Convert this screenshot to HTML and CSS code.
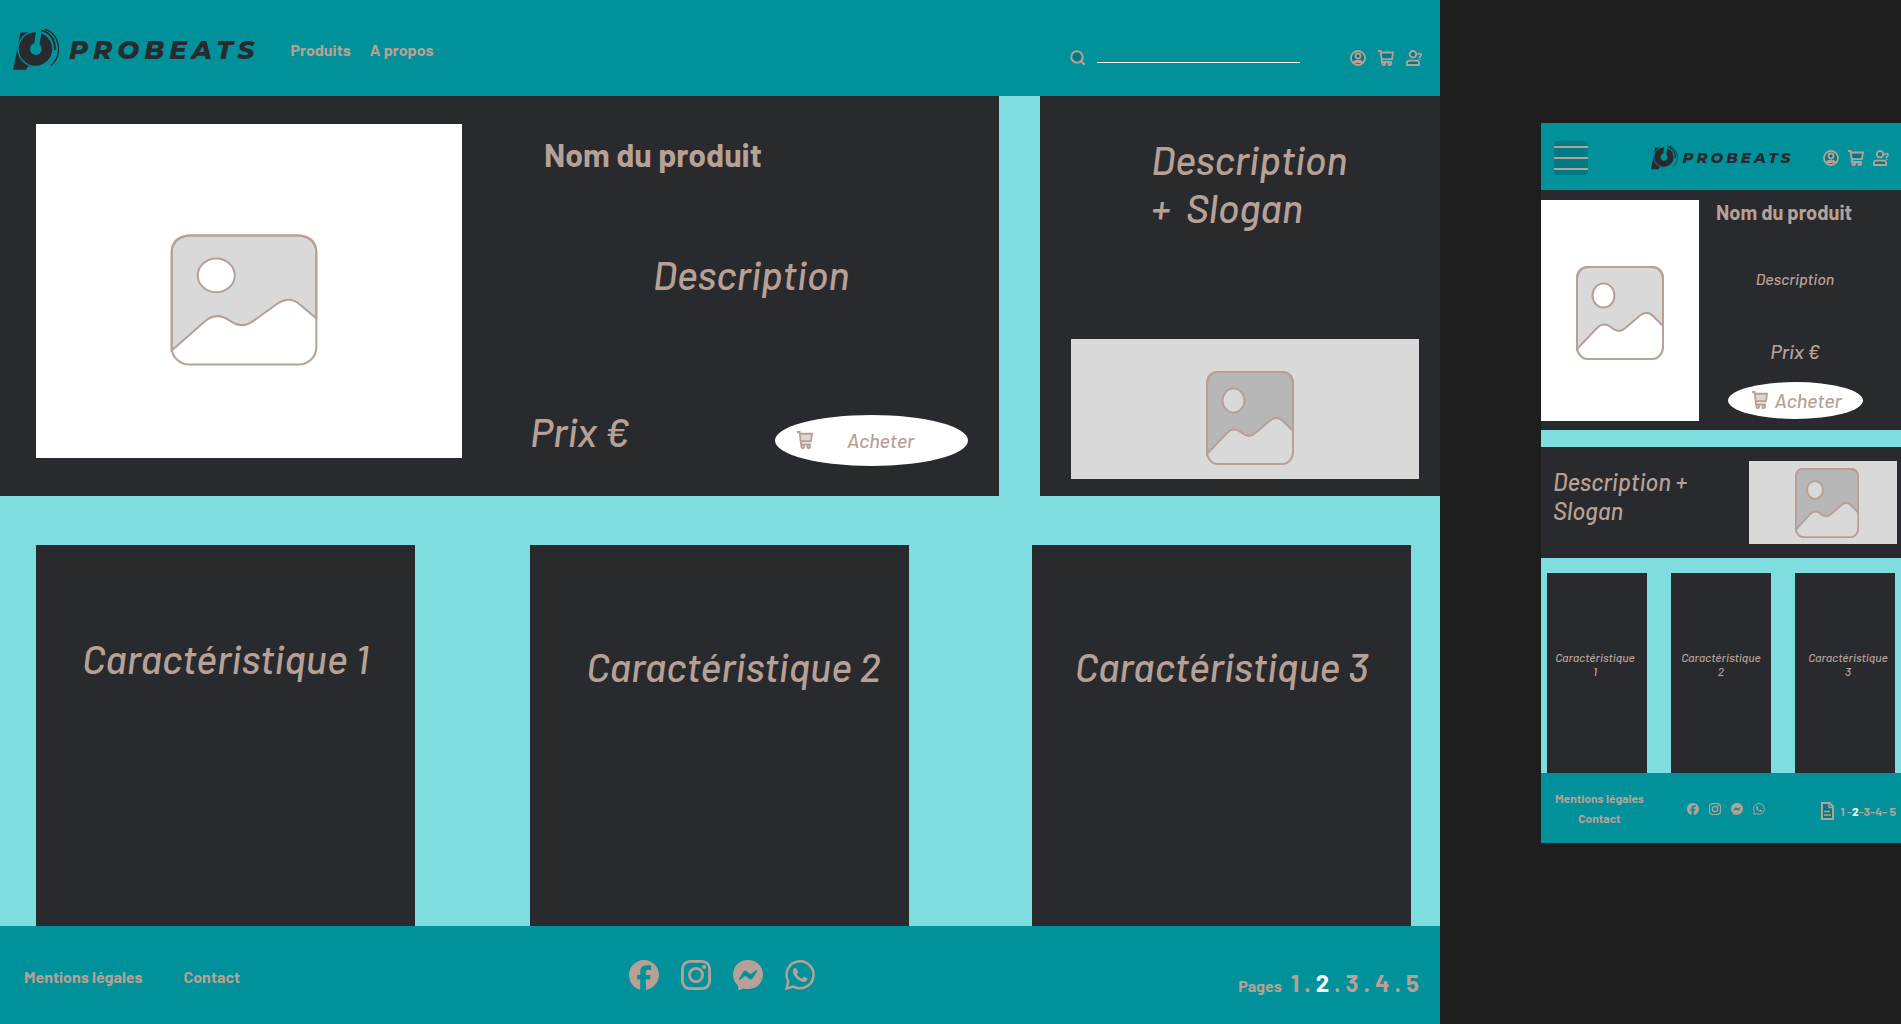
FILE: index.html
```html
<!DOCTYPE html>
<html lang="fr">
<head>
<meta charset="utf-8">
<meta name="viewport" content="width=device-width, initial-scale=1">
<title>Probeats</title>
<link rel="stylesheet" href="styles.css">
</head>
<body>
<svg class="sprite" aria-hidden="true">
  <symbol id="logo" viewBox="38 86 142 125">
    <path fill="currentColor" d="M60 97H104V200H82L78 210H38Z"/>
    <circle class="logo-cut" cx="106" cy="147" r="55"/>
    <circle fill="currentColor" cx="106" cy="147" r="51"/>
    <circle class="logo-cut" cx="107" cy="147" r="18"/>
    <path class="logo-cut" d="M108 90H125L118 136H101Z"/>
    <g fill="none" stroke="currentColor" stroke-width="4">
      <path d="M134 88C160 92 176 118 176 147C176 168 167 186 153 197"/>
      <path d="M124 91C150 95 167 120 165 150" stroke-width="6"/>
    </g>
  </symbol>
  <symbol id="placeholder" viewBox="0 0 88 94" preserveAspectRatio="none">
    <path class="ph-sky" d="M1 83V13Q1 1 13 1H75Q87 1 87 13V60L77 50Q71 44 64 49.500L50 61.500Q43 68 36 62Q28 55 21 62Z"/>
    <ellipse class="ph-sun" cx="27.500" cy="29.500" rx="11" ry="12"/>
    <rect class="ph-line" x="1" y="1" width="86" height="92" rx="11" ry="12"/>
  </symbol>
  <symbol id="search" viewBox="0 0 16 16">
    <circle class="tint" cx="7" cy="7" r="5.700" stroke="currentColor" stroke-width="2"/>
    <path d="M11 11L14.500 14.800" stroke="currentColor" stroke-width="2.200"/>
  </symbol>
  <symbol id="account" viewBox="0 0 16 16">
    <g class="tint" stroke="currentColor" stroke-width="1.800">
      <circle cx="8" cy="8" r="7"/><circle cx="8" cy="6" r="2.500"/>
      <path d="M3.800 12.200C5 10 11 10 12.200 12.200Z"/>
    </g>
  </symbol>
  <symbol id="cart" viewBox="0 0 16 16" preserveAspectRatio="none">
    <path class="tint" d="M3 2H15.200L14 10H4Z"/>
    <g fill="none" stroke="currentColor" stroke-width="1.800">
      <path d="M0 1H2.600L4 12H13.800M3 2.500H15L14 9.200H3.800"/>
      <circle cx="5.700" cy="13.800" r="1.400"/><circle cx="11.700" cy="13.800" r="1.400"/>
    </g>
  </symbol>
  <symbol id="help" viewBox="0 0 16 16">
    <g class="tint" stroke="currentColor" stroke-width="1.900">
      <circle cx="7" cy="4.200" r="3.200"/>
      <path d="M1 15V12.500Q1 10.600 4 10.600H10Q13 10.600 13 12.500V15Z"/>
    </g>
    <path d="M11.800 5Q12 3.400 13.600 3.500Q15.200 3.700 15 5.200Q14.800 6.200 13.600 7V8.200M13.600 9V10" fill="none" stroke="currentColor" stroke-width="1.700"/>
  </symbol>
  <symbol id="facebook" viewBox="0 0 16 16"><path fill="currentColor" d="M16 8.049c0-4.446-3.582-8.050-8-8.050C3.580 0 0 3.603 0 8.050c0 4.017 2.926 7.347 6 7.851v-5.525H4.300V8.050H6V6.275c0-2.317 1.395-3.431 3.500-3.431h2.300v2.300H10.300c-.993 0-1.303.621-1.303 1.258v1.648h2.518l-.354 2.326H9V16c3.824-.604 7-3.934 7-7.951"/></symbol>
  <symbol id="instagram" viewBox="0 0 16 16">
    <g fill="none" stroke="currentColor" stroke-width="1.500"><rect x=".75" y=".75" width="14.500" height="14.500" rx="4"/><circle cx="8" cy="8" r="3.500"/></g>
    <circle cx="12.300" cy="3.700" r="1.100" fill="currentColor"/>
  </symbol>
  <symbol id="messenger" viewBox="0 0 16 16"><path fill="currentColor" fill-rule="evenodd" d="M0 7.760C0 3.301 3.493 0 8 0s8 3.301 8 7.760-3.493 7.760-8 7.760c-.81 0-1.586-.107-2.316-.307a.64.64 0 0 0-.427.03l-1.588.702a.64.64 0 0 1-.898-.566l-.044-1.423a.64.64 0 0 0-.215-.456C.956 12.108 0 10.092 0 7.760m5.546-1.459-2.350 3.728c-.225.358.214.761.551.506l2.525-1.916a.48.48 0 0 1 .578-.002l1.869 1.402a1.200 1.200 0 0 0 1.735-.32l2.350-3.728c.226-.358-.214-.761-.551-.506L9.728 7.381a.48.48 0 0 1-.578.002L7.281 5.980a1.200 1.200 0 0 0-1.735.32z"/></symbol>
  <symbol id="whatsapp" viewBox="0 0 16 16">
    <path d="M.8 15.200L1.800 11.500A7.200 7.200 0 1 1 4.600 14.200Z" fill="none" stroke="currentColor" stroke-width="1.300"/>
    <path fill="currentColor" d="M4.200 6C4.100 4.700 5.300 4.100 6 4.400L6.900 6.300Q7 6.700 6.300 7.500C7 8.800 8 9.500 9 9.900L9.900 9Q10.200 8.800 12 9.900C12.100 10.900 11 11.800 10 11.700C7.300 11.500 4.300 8.600 4.200 6Z"/>
  </symbol>
  <symbol id="document" viewBox="0 0 13 18">
    <path class="tint" d="M1 1H8.500L12 4.500V17H1Z" stroke="currentColor" stroke-width="2"/>
    <path d="M8 1V5.500H12M3 9.500H9M3 13H10" fill="none" stroke="currentColor" stroke-width="1.400"/>
  </symbol>
</svg>

<div class="board">
  <div class="frame desktop">
    <header class="topbar">
      <a class="brand" href="#"><svg class="brand-mark"><use href="#logo"/></svg><span class="brand-name">PROBEATS</span></a>
      <nav class="menu"><a href="#">Produits</a><a href="#">A propos</a></nav>
      <form class="search" role="search">
        <label for="q"><svg class="icon"><use href="#search"/></svg></label>
        <input id="q" type="search" aria-label="Rechercher">
      </form>
      <div class="tools">
        <a href="#" aria-label="Compte"><svg class="icon"><use href="#account"/></svg></a>
        <a href="#" aria-label="Panier"><svg class="icon"><use href="#cart"/></svg></a>
        <a href="#" aria-label="Aide"><svg class="icon"><use href="#help"/></svg></a>
      </div>
    </header>
    <main>
      <div class="hero">
        <section class="product">
          <div class="picture"><svg class="placeholder"><use href="#placeholder"/></svg></div>
          <div class="details">
            <h1 class="name">Nom du produit</h1>
            <p class="description">Description</p>
            <div class="purchase">
              <p class="price">Prix €</p>
              <button class="buy" type="button"><svg class="icon"><use href="#cart"/></svg><span>Acheter</span></button>
            </div>
          </div>
        </section>
        <section class="pitch">
          <p class="slogan">Description<br>+&nbsp; Slogan</p>
          <div class="picture muted"><svg class="placeholder"><use href="#placeholder"/></svg></div>
        </section>
      </div>
      <div class="features">
        <section class="feature feature-first"><h2>Caractéristique 1</h2></section>
        <section class="feature feature-second"><h2>Caractéristique 2</h2></section>
        <section class="feature feature-third"><h2>Caractéristique 3</h2></section>
      </div>
    </main>
    <footer class="bottombar">
      <nav class="legal"><a href="#">Mentions légales</a><a href="#">Contact</a></nav>
      <div class="social">
        <a href="#" aria-label="Facebook"><svg><use href="#facebook"/></svg></a>
        <a href="#" aria-label="Instagram"><svg><use href="#instagram"/></svg></a>
        <a href="#" aria-label="Messenger"><svg><use href="#messenger"/></svg></a>
        <a href="#" aria-label="WhatsApp"><svg><use href="#whatsapp"/></svg></a>
      </div>
      <nav class="pages" aria-label="Pages">
        <span class="pages-label">Pages</span>
        <a href="#">1</a><span>.</span><a href="#" aria-current="page">2</a><span>.</span><a href="#">3</a><span>.</span><a href="#">4</a><span>.</span><a href="#">5</a>
      </nav>
    </footer>
  </div>

  <div class="frame mobile">
    <header class="topbar">
      <button class="burger" type="button" aria-label="Menu"><span></span><span></span><span></span></button>
      <a class="brand" href="#"><svg class="brand-mark"><use href="#logo"/></svg><span class="brand-name">PROBEATS</span></a>
      <div class="tools">
        <a href="#" aria-label="Compte"><svg class="icon"><use href="#account"/></svg></a>
        <a href="#" aria-label="Panier"><svg class="icon"><use href="#cart"/></svg></a>
        <a href="#" aria-label="Aide"><svg class="icon"><use href="#help"/></svg></a>
      </div>
    </header>
    <main>
      <section class="product">
        <div class="picture"><svg class="placeholder"><use href="#placeholder"/></svg></div>
        <div class="details">
          <h1 class="name">Nom du produit</h1>
          <p class="description">Description</p>
          <p class="price">Prix €</p>
          <button class="buy" type="button"><svg class="icon"><use href="#cart"/></svg><span>Acheter</span></button>
        </div>
      </section>
      <section class="pitch">
        <p class="slogan">Description +<br>Slogan</p>
        <div class="picture muted"><svg class="placeholder"><use href="#placeholder"/></svg></div>
      </section>
      <div class="features">
        <section class="feature feature-first"><h2>Caractéristique 1</h2></section>
        <section class="feature"><h2>Caractéristique 2</h2></section>
        <section class="feature feature-third"><h2>Caractéristique 3</h2></section>
      </div>
    </main>
    <footer class="bottombar">
      <nav class="legal"><a href="#">Mentions légales</a><a href="#">Contact</a></nav>
      <div class="social">
        <a href="#" aria-label="Facebook"><svg><use href="#facebook"/></svg></a>
        <a href="#" aria-label="Instagram"><svg><use href="#instagram"/></svg></a>
        <a href="#" aria-label="Messenger"><svg><use href="#messenger"/></svg></a>
        <a href="#" aria-label="WhatsApp"><svg><use href="#whatsapp"/></svg></a>
      </div>
      <nav class="pages" aria-label="Pages">
        <svg class="doc"><use href="#document"/></svg>
        <span><a href="#">1</a> -<a href="#" aria-current="page">2</a>-<a href="#">3</a>-<a href="#">4</a>- <a href="#">5</a></span>
      </nav>
    </footer>
  </div>
</div>
</body>
</html>
```
FILE: styles.css
```css
:root {
  --teal: #00919a;
  --aqua: #7fdde0;
  --ink: #292a2e;
  --sand: #b7a197;
  --grey: #d9d9d9;
}

* { box-sizing: border-box; }

body {
  margin: 0;
  background: #1e1e1e;
  color: var(--sand);
  font: 500 16px/20px Barlow, Roboto, sans-serif;
}

h1, h2, p { margin: 0; }
a { color: inherit; text-decoration: none; }
svg { display: block; }
button { border: 0; padding: 0; color: inherit; font: inherit; cursor: pointer; }

.sprite { position: absolute; width: 0; height: 0; }
.logo-cut { fill: var(--teal); }
.tint { fill: rgba(0, 0, 0, .15); }
.icon { width: 16px; height: 16px; }

.board {
  display: grid;
  grid-template-columns: 1440fr 360fr;
  column-gap: 101px;
  align-items: start;
  min-height: 100vh;
}

.frame { background: var(--aqua); }

/* Shared pieces */
.topbar, .bottombar { display: flex; background: var(--teal); }
.brand { display: flex; color: var(--ink); }
.brand-name {
  font-family: Montserrat, Inter, sans-serif;
  font-weight: 800;
  font-style: italic;
}
.menu, .bottombar { font-weight: 700; }
.tools, .social, .menu, .search { display: flex; }
.name { font-weight: 700; }
.description, .price, .slogan, .feature h2, .buy { font-style: italic; font-weight: 500; }

.product, .pitch, .feature { background: var(--ink); }
.product { display: grid; }

.picture {
  --sky: var(--grey);
  --ground: #fff;
  display: flex;
  align-items: center;
  justify-content: center;
  background: var(--ground);
}
.picture.muted { --sky: #b7b7b7; --ground: var(--grey); }
.ph-sky { fill: var(--sky); }
.ph-sun { fill: var(--ground); }
.ph-line { fill: none; }
.ph-sky, .ph-sun, .ph-line {
  stroke: var(--sand);
  stroke-width: 2px;
  vector-effect: non-scaling-stroke;
}

.buy {
  display: flex;
  align-items: center;
  border-radius: 50%;
  background: #fff;
  font-size: 20px;
  line-height: 24px;
}
.buy .icon { height: 18px; }

.features { display: grid; }
.feature h2 { text-align: center; }
[aria-current="page"] { color: #fff; }

/* Desktop frame */
.desktop .topbar { height: 96px; padding: 0 17px 0 13px; }
.desktop .brand { align-self: center; align-items: center; gap: 9px; padding-top: 3px; }
.desktop .brand-mark { width: 47px; height: 41px; }
.desktop .brand-name { font-size: 26px; line-height: 32px; letter-spacing: 5px; }
.desktop .menu { align-self: center; gap: 19px; margin: 4px auto 0 31px; }
.desktop .search { align-items: flex-start; gap: 11px; padding-top: 50px; }
.search input {
  width: 203px;
  height: 13px;
  padding: 0;
  border: 0;
  border-bottom: 1px solid #fff;
  outline: 0;
  background: none;
  color: #fff;
  font: inherit;
}
.desktop .tools { gap: 12px; padding: 50px 1px 0 50px; }

.hero { display: grid; grid-template-columns: 999fr 400fr; column-gap: 41px; }
.desktop .product { grid-template-columns: 426fr 537fr; padding: 28px 0 30px 36px; }
.desktop .product .picture { margin-bottom: 8px; }
.desktop .product .placeholder { width: 148px; height: 132px; margin: 18px 10px 0 0; }
.desktop .details { padding: 10px 31px 0 68px; }
.desktop .name { padding-left: 14px; font-size: 32px; line-height: 40px; }
.desktop .description { margin-top: 76px; padding-left: 4px; text-align: center; font-size: 40px; line-height: 48px; }
.purchase { display: flex; justify-content: space-between; margin-top: 109px; }
.desktop .price { font-size: 40px; line-height: 48px; }
.desktop .buy { width: 193px; height: 51px; margin-top: 8px; padding: 0 0 1px 22px; gap: 34px; }

.desktop .pitch {
  display: flex;
  flex-direction: column;
  justify-content: space-between;
  padding: 39px 21px 17px 31px;
}
.desktop .slogan { padding-left: 80px; font-size: 40px; line-height: 48px; }
.desktop .pitch .picture { height: 140px; padding: 18px 0 0 10px; }
.desktop .pitch .placeholder { width: 88px; height: 94px; }

.desktop .features {
  grid-template-columns: 379fr 115fr 379fr 123fr 379fr;
  padding: 49px 29px 0 36px;
}
.desktop .feature { min-height: 381px; padding-top: 97px; }
.desktop .feature-first { padding-top: 89px; }
.desktop .feature-second { grid-column: 3; padding-left: 28px; }
.desktop .feature-third { grid-column: 5; }
.desktop .feature h2 { font-size: 40px; line-height: 48px; white-space: nowrap; }

.desktop .bottombar {
  display: grid;
  grid-template-columns: 1fr auto 1fr;
  align-items: center;
  min-height: 98px;
  padding: 0 21px 0 24px;
}
.desktop .legal { display: flex; gap: 41px; padding-top: 3px; }
.desktop .social { gap: 22px; }
.desktop .social svg { width: 30px; height: 30px; }
.desktop .pages {
  display: flex;
  align-items: baseline;
  justify-content: flex-end;
  gap: 5px;
  padding-top: 18px;
  font-size: 24px;
  line-height: 28px;
}
.pages-label { margin-right: 4px; font-size: 16px; }

/* Mobile frame */
.mobile { margin-top: 123px; }
.mobile .topbar {
  align-items: center;
  justify-content: space-between;
  height: 67px;
  padding: 2px 12px 0 13px;
}
.burger {
  display: flex;
  flex-direction: column;
  justify-content: center;
  gap: 9px;
  width: 34px;
  height: 34px;
  border-radius: 4px;
  background: rgba(0, 0, 0, .15);
}
.burger span { height: 2px; background: var(--sand); }
.mobile .brand { align-items: center; gap: 5px; margin-left: 33px; }
.mobile .brand-mark { width: 27px; height: 27px; }
.mobile .brand-name { font-size: 15px; line-height: 20px; letter-spacing: 3px; }
.mobile .tools { gap: 9px; }

.mobile .product { grid-template-columns: 158fr 202fr; min-height: 240px; padding: 10px 0 9px; }
.mobile .product .picture { padding: 4px 1px 0 0; }
.mobile .product .placeholder { width: 88px; height: 94px; }
.mobile .details { display: flex; flex-direction: column; align-items: center; padding: 0 10px 2px 0; }
.mobile .name { align-self: flex-start; padding-left: 17px; font-size: 20px; line-height: 24px; }
.mobile .description { margin-top: 45px; font-size: 16px; line-height: 20px; }
.mobile .price { margin-top: 50px; font-size: 20px; line-height: 24px; }
.mobile .buy { width: 135px; height: 37px; margin-top: auto; padding: 0 0 1px 24px; gap: 7px; }

.mobile .pitch {
  display: flex;
  align-items: flex-start;
  justify-content: space-between;
  margin: 17px 0 15px;
  padding: 14px 4px 14px 12px;
}
.mobile .slogan { padding: 6px 0; font-size: 24px; line-height: 29px; }
.mobile .pitch .picture { width: 148px; height: 83px; padding-left: 8px; }
.mobile .pitch .placeholder { width: 64px; height: 70px; }

.mobile .features { grid-template-columns: repeat(3, 1fr); column-gap: 24px; padding: 0 6px; }
.mobile .feature { min-height: 200px; padding: 77px 8px 0; }
.mobile .feature-first { padding-right: 12px; }
.mobile .feature-third { padding: 77px 4px 0 10px; }
.mobile .feature h2 { font-size: 12px; line-height: 14px; }

.mobile .bottombar {
  align-items: center;
  justify-content: space-between;
  min-height: 70px;
  padding: 0 5px 0 14px;
  font-size: 12px;
}
.mobile .legal { display: flex; flex-direction: column; align-items: center; }
.mobile .social { gap: 10px; padding: 2px 14px 0 0; }
.mobile .social svg { width: 12px; height: 12px; }
.mobile .pages { display: flex; align-items: center; gap: 6px; padding-top: 5px; }
.doc { width: 13px; height: 18px; }
```
